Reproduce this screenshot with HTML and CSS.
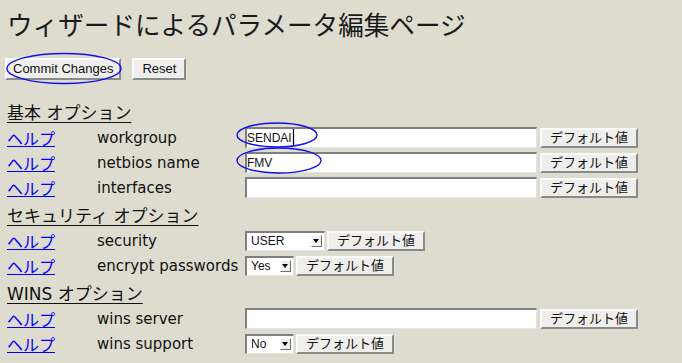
FILE: index.html
```html
<!DOCTYPE html>
<html lang="ja">
  <head>
    <meta charset="UTF-8" />
    <title>ウィザードによるパラメータ編集ページ</title>
    <link rel="stylesheet" href="styles.css">
  </head>
  <body>
    <h1 class="page-title">ウィザードによるパラメータ編集ページ</h1>
    <form class="wizard-form">
      <div class="form-actions">
        <button type="button" class="btn btn-commit">Commit Changes</button>
        <button type="reset" class="btn">Reset</button>
      </div>

      <h2 class="section-title">基本 オプション</h2>
      <div class="param-row">
        <a class="help-link" href="#">ヘルプ</a>
        <span class="param-name">workgroup</span>
        <div class="param-control">
          <input class="text-input" type="text" value="SENDAI" />
          <button type="button" class="btn btn-default">デフォルト値</button>
        </div>
      </div>
      <div class="param-row">
        <a class="help-link" href="#">ヘルプ</a>
        <span class="param-name">netbios name</span>
        <div class="param-control">
          <input class="text-input" type="text" value="FMV" />
          <button type="button" class="btn btn-default">デフォルト値</button>
        </div>
      </div>
      <div class="param-row">
        <a class="help-link" href="#">ヘルプ</a>
        <span class="param-name">interfaces</span>
        <div class="param-control">
          <input class="text-input" type="text" value="" />
          <button type="button" class="btn btn-default">デフォルト値</button>
        </div>
      </div>

      <h2 class="section-title">セキュリティ オプション</h2>
      <div class="param-row">
        <a class="help-link" href="#">ヘルプ</a>
        <span class="param-name">security</span>
        <div class="param-control">
          <label class="select-box select-wide">
            <select><option>USER</option><option>SHARE</option><option>SERVER</option></select>
            <span class="select-arrow"></span>
          </label>
          <button type="button" class="btn btn-default btn-tight">デフォルト値</button>
        </div>
      </div>
      <div class="param-row">
        <a class="help-link" href="#">ヘルプ</a>
        <span class="param-name">encrypt passwords</span>
        <div class="param-control">
          <label class="select-box">
            <select><option>Yes</option><option>No</option></select>
            <span class="select-arrow"></span>
          </label>
          <button type="button" class="btn btn-default btn-tight">デフォルト値</button>
        </div>
      </div>

      <h2 class="section-title">WINS オプション</h2>
      <div class="param-row">
        <a class="help-link" href="#">ヘルプ</a>
        <span class="param-name">wins server</span>
        <div class="param-control">
          <input class="text-input" type="text" value="" />
          <button type="button" class="btn btn-default">デフォルト値</button>
        </div>
      </div>
      <div class="param-row">
        <a class="help-link" href="#">ヘルプ</a>
        <span class="param-name">wins support</span>
        <div class="param-control">
          <label class="select-box">
            <select><option>No</option><option>Yes</option></select>
            <span class="select-arrow"></span>
          </label>
          <button type="button" class="btn btn-default btn-tight">デフォルト値</button>
        </div>
      </div>
    </form>

    <!-- hand drawn marks on top of the screenshot -->
    <svg class="marks" width="682" height="363" viewBox="0 0 682 363">
      <ellipse cx="64" cy="68.5" rx="57" ry="15" />
      <ellipse cx="277" cy="135" rx="40" ry="12" />
      <ellipse cx="279" cy="160.5" rx="42" ry="12.5" />
      <line class="caret" x1="293.5" y1="129" x2="293.5" y2="146" />
    </svg>
  </body>
</html>
```

FILE: styles.css
```css
html {
  box-sizing: border-box;
}
*,
*::after,
*::before {
  box-sizing: inherit;
}

body {
  position: relative;
  margin: 0;
  padding: 0 7px;
  background-color: #dddccf;
  color: #111;
  font-family: 'DejaVu Sans', 'Noto Sans CJK JP', sans-serif;
  font-size: 15px;
}

.page-title {
  margin: 0;
  padding-top: 6px;
  height: 41px;
  font-family: 'Noto Sans CJK JP', sans-serif;
  font-size: 25.6px;
  font-weight: normal;
  line-height: 35px;
  color: #1a1a1a;
}

.form-actions {
  display: flex;
  gap: 11px;
  padding-top: 17px;
  margin-left: -2px;
  height: 56px;
}

.btn {
  height: 22px;
  padding: 0 8px;
  background-color: #eeeeec;
  border: 2px solid;
  border-color: #fafafa #8a8a8a #8a8a8a #fafafa;
  border-radius: 0;
  color: #111;
  font-family: 'Liberation Sans', 'Noto Sans CJK JP', sans-serif;
  font-size: 13px;
  line-height: 16px;
  cursor: pointer;
}

.btn-commit {
  padding: 0 6px;
}

.btn-default {
  height: 20px;
  margin-left: 3px;
}

.btn-default.btn-tight {
  margin-left: 2px;
}

.section-title {
  margin: 0;
  height: 28px;
  padding-top: 4px;
  font-size: 17px;
  font-weight: normal;
  line-height: 24px;
  text-decoration: underline;
  text-underline-offset: 3px;
}

.param-row {
  display: grid;
  grid-template-columns: 90px 148px auto;
  align-items: center;
  height: 25px;
}

.help-link {
  font-family: 'Noto Sans CJK JP', sans-serif;
  font-size: 16px;
  color: #0000ff;
}

.param-name {
  white-space: nowrap;
}

.param-control {
  display: flex;
  align-items: center;
}

.text-input {
  width: 292px;
  height: 21px;
  padding: 0;
  background-color: #fff;
  border: 2px solid;
  border-color: #7f7f7f #e4e4e4 #e4e4e4 #7f7f7f;
  border-width: 2px 1px 1px 2px;
  font-family: 'Liberation Sans', sans-serif;
  font-size: 12px;
  color: #111;
  outline: none;
}

.select-box {
  display: flex;
  align-items: center;
  width: 49px;
  height: 20px;
  padding: 0 2px 0 4px;
  background-color: #fff;
  border: 2px solid;
  border-color: #7f7f7f #e4e4e4 #e4e4e4 #7f7f7f;
  border-width: 2px 1px 1px 2px;
}

.select-box.select-wide {
  width: 80px;
}

.select-box select {
  flex: 1;
  min-width: 0;
  padding: 0;
  border: none;
  background: transparent;
  appearance: none;
  font-family: 'Liberation Sans', sans-serif;
  font-size: 12px;
  color: #111;
  outline: none;
}

.select-arrow {
  position: relative;
  width: 11px;
  height: 12px;
  background-color: #eeeeec;
  border: 1px solid;
  border-color: #fafafa #6f6f6f #6f6f6f #fafafa;
}

.select-arrow::after {
  content: '';
  position: absolute;
  left: 1px;
  top: 3px;
  border-left: 3.5px solid transparent;
  border-right: 3.5px solid transparent;
  border-top: 4px solid #000;
}

.marks {
  position: absolute;
  left: 0;
  top: 0;
  pointer-events: none;
}

.marks ellipse {
  fill: none;
  stroke: #1010ee;
  stroke-width: 1.4;
}

.marks .caret {
  stroke: #000;
  stroke-width: 1.2;
}
```
